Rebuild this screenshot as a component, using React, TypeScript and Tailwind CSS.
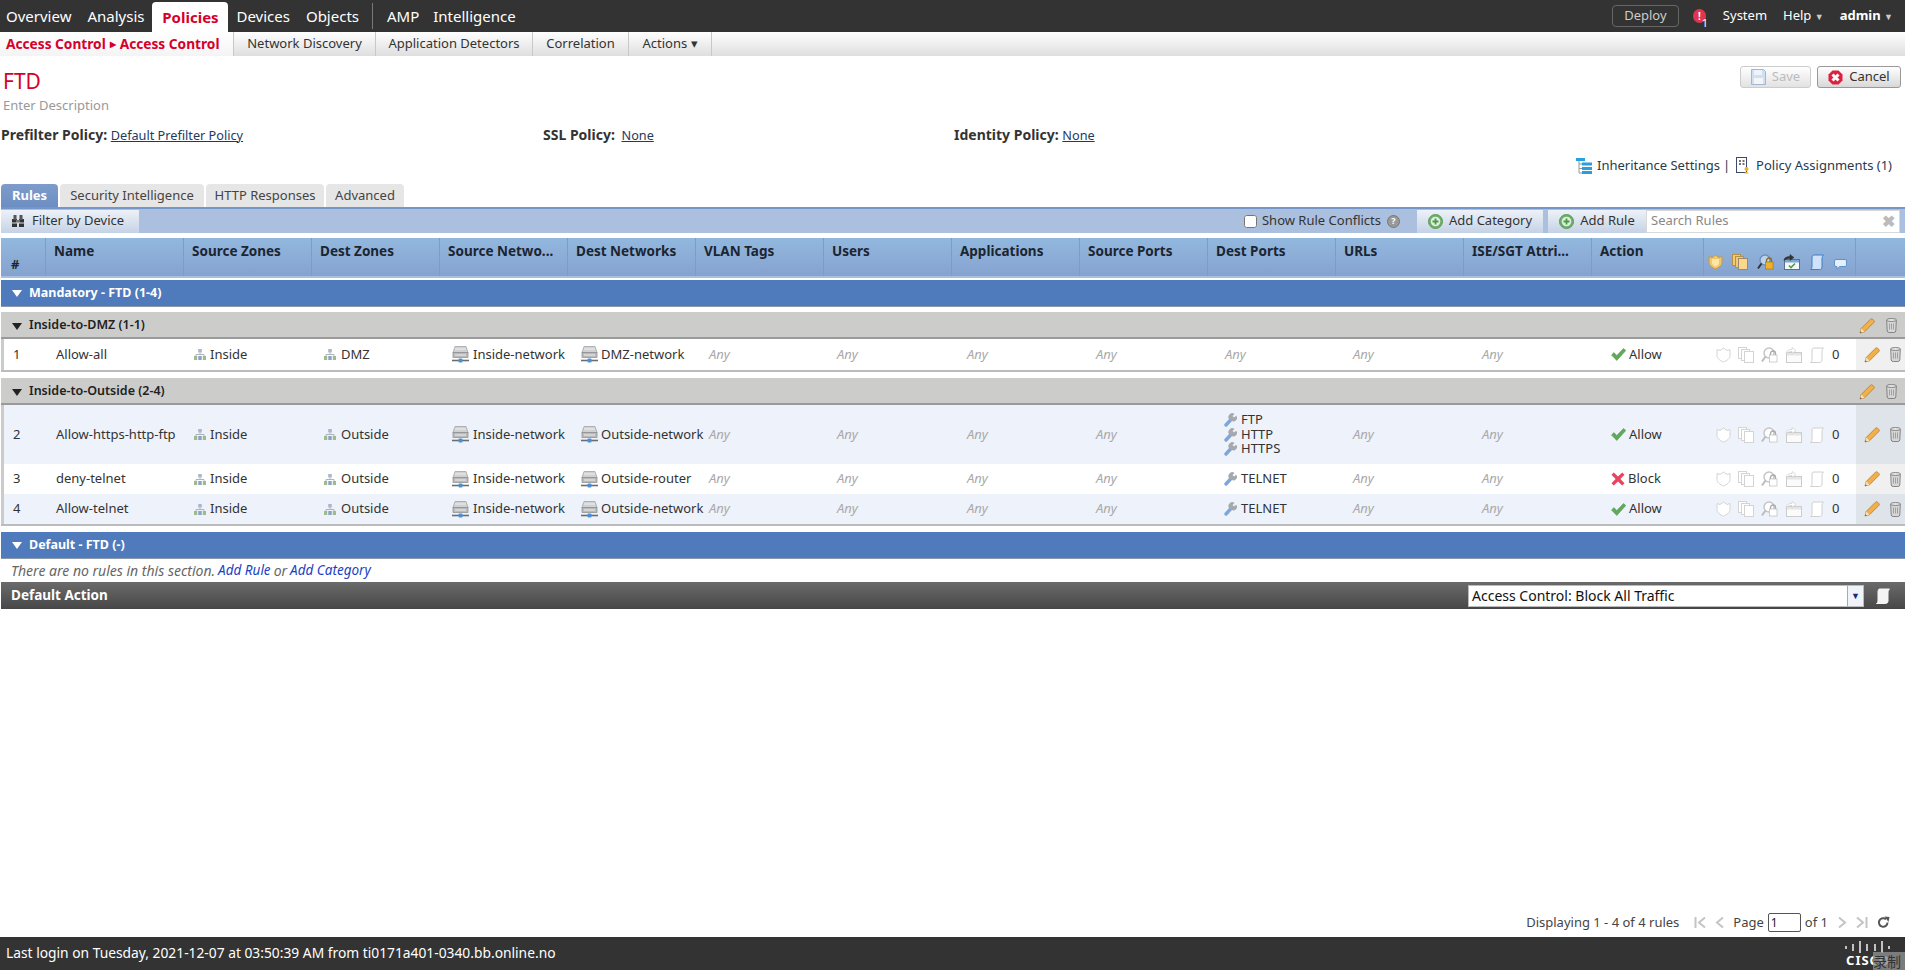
import React from 'react';

const COLS = 'grid grid-cols-[45px_138px_repeat(11,128px)_112px_152px_1fr]';

type IconProps = { muted?: boolean };

const ZoneIcon = () => (
  <svg width="12" height="11" viewBox="0 0 12 11" className="shrink-0">
    <rect x="4.200" y="0" width="3.600" height="3.500" fill="#a9b8d0" />
    <path d="M6 3.500v2M2 7V5.500h8V7" stroke="#b0b4ba" fill="none" />
    <rect x="0" y="7" width="3.200" height="4" fill="#9dbb8f" />
    <rect x="4.300" y="7" width="3.400" height="4" fill="#8aa2c4" />
    <rect x="8.800" y="7" width="3.200" height="4" fill="#9dbb8f" />
  </svg>
);

const NetIcon = () => (
  <svg width="17" height="17" viewBox="0 0 17 17" className="shrink-0">
    <path d="M3 .5h11l2 6H1z" fill="#d0d1d2" stroke="#9a9b9c" strokeWidth="0.700" />
    <rect x="1" y="6.500" width="15" height="5" fill="#b9babb" stroke="#8a8b8c" strokeWidth="0.700" />
    <path d="M3 3h11M3 9h11" stroke="#eeeeee" />
    <path d="M0 14.500h17" stroke="#6a6c6e" strokeWidth="1.600" />
    <rect x="6.500" y="12.500" width="4" height="4" rx="1" fill="#4a90d9" />
  </svg>
);

const PortIcon = () => (
  <svg width="13" height="14" viewBox="0 0 13 14" className="shrink-0">
    <path d="M2 12 7 6.500" stroke="#7fa6dc" strokeWidth="3.400" strokeLinecap="round" />
    <path d="M6 7 a3.400 3.400 0 0 1 4.500-6 l-2 2 1.600 1.500 2-1.800 a3.400 3.400 0 0 1-4.800 4.800z" fill="#a5a8ad" />
  </svg>
);

const Check = () => (
  <svg width="15" height="13" viewBox="0 0 15 13" className="shrink-0">
    <path d="M0.500 7 3 4.600 5.700 7.600 12.500 0.500 14.800 2.500 5.800 12.500z" fill="#63a95b" stroke="#4a9146" strokeWidth="0.500" />
  </svg>
);

const Cross = () => (
  <svg width="14" height="14" viewBox="0 0 14 14" className="shrink-0">
    <path d="M0.500 2.800 2.800 0.500 7 4.600 11.200 0.500 13.500 2.800 9.400 7 13.500 11.200 11.200 13.500 7 9.400 2.800 13.500 0.500 11.200 4.600 7z" fill="#e8435f" />
  </svg>
);

const Shield = ({ muted }: IconProps) => (
  <svg width="15" height="16" viewBox="0 0 15 16" className="shrink-0">
    <path d="M1 2.500 4 3.500 7.500 1 11 3.500 14 2.500v6c0 3-3.500 5.500-6.500 6.500C4.500 14 1 11.500 1 8.500z" fill={muted ? '#fff' : '#f3c568'} stroke={muted ? '#d4d4d4' : '#c89a3a'} />
    {!muted && <path d="M4 5h7v4c0 1.500-2 3-3.500 3.500C6 12 4 10.500 4 9z" fill="#fbe6a8" />}
  </svg>
);

const Docs = ({ muted }: IconProps) => (
  <svg width="16" height="16" viewBox="0 0 16 16" className="shrink-0">
    <rect x="0.500" y="0.500" width="8" height="11" fill={muted ? '#fff' : '#f5c876'} stroke={muted ? '#d4d4d4' : '#b78f45'} />
    <rect x="3.500" y="2.500" width="8" height="11" fill={muted ? '#fff' : '#f5c876'} stroke={muted ? '#d4d4d4' : '#b78f45'} />
    <rect x="6.500" y="4.500" width="9" height="11" fill={muted ? '#fff' : '#fbd78e'} stroke={muted ? '#d4d4d4' : '#9a8a6a'} />
  </svg>
);

const LockSearch = ({ muted }: IconProps) => (
  <svg width="17" height="16" viewBox="0 0 17 16" className="shrink-0">
    <circle cx="8" cy="6" r="5" fill={muted ? '#fff' : '#bcd3ee'} stroke={muted ? '#c4c4c4' : '#6d8fb8'} strokeWidth="1.400" />
    <path d="M4.500 9.500 1 14.500" stroke={muted ? '#bcbcbc' : '#333'} strokeWidth="2" />
    <path d="M9.500 8V6.500a2.500 2.500 0 0 1 5 0V8" fill="none" stroke={muted ? '#aaaaaa' : '#8c6a1e'} strokeWidth="1.300" />
    <rect x="8.500" y="8" width="7.500" height="7" fill={muted ? '#fff' : '#eeb22e'} stroke={muted ? '#bcbcbc' : '#a47a1a'} strokeWidth="0.700" />
  </svg>
);

const BoxIcon = ({ muted }: IconProps) => (
  <svg width="17" height="16" viewBox="0 0 17 16" className="shrink-0">
    <rect x="1.500" y="5.500" width="15" height="10" fill={muted ? '#fbfbfb' : '#f3f6fa'} stroke={muted ? '#cccccc' : '#5b6f88'} />
    <rect x="2" y="6" width="14" height="2.500" fill={muted ? '#e6e6e6' : '#7ea6d2'} />
    <path d="M1 6.500C1 3.500 4 2.500 7 2.500V0.500L11 3.500 7 6.500V4.500C4.500 4.500 3 5 1 6.500z" fill={muted ? '#fff' : '#333'} stroke={muted ? '#bcbcbc' : '#333'} strokeWidth="0.500" />
    {!muted && <path d="M6 11.500 8 13.500 12 9.500" stroke="#4f9c48" strokeWidth="1.600" fill="none" />}
  </svg>
);

const Scroll = ({ muted, white }: IconProps & { white?: boolean }) => {
  const fill = white ? '#f4f4f4' : muted ? '#fff' : '#cfe2f7';
  const line = white ? '#f4f4f4' : muted ? '#d0d0d0' : '#3f7fc4';
  return (
    <svg width="16" height="16" viewBox="0 0 16 16" className="shrink-0">
      <path d="M4 1h10.500c-1 1-1.500 2-1.500 4v8c0 1.500-1 2.500-2.500 2.500H1.500c1-.5 1.500-1.500 1.500-2.500V4C3 2.500 3.500 1.500 4 1z" fill={fill} stroke={line} />
    </svg>
  );
};

const Chat = () => (
  <svg width="13" height="11" viewBox="0 0 13 11" className="shrink-0">
    <path d="M2 .5h9a1.500 1.500 0 0 1 1.500 1.500v4a1.500 1.500 0 0 1-1.500 1.500H5.500L3 10.500V7.500H2A1.500 1.500 0 0 1 .5 6V2A1.500 1.500 0 0 1 2 .5z" fill="#e6f0fb" stroke="#5c93cc" />
  </svg>
);

const Pencil = () => (
  <svg width="16" height="16" viewBox="0 0 16 16" className="shrink-0">
    <path d="M1 15l1.200-4.500L11.500 1.200a1.500 1.500 0 0 1 2.100 0l1.200 1.200a1.500 1.500 0 0 1 0 2.100L5.500 13.800z" fill="#f2b04a" stroke="#b8792a" strokeWidth="0.800" />
    <path d="M1 15l1.200-4.500 3.300 3.300z" fill="#f7e0ba" />
    <path d="M1 15l.5-1.800 1.300 1.300z" fill="#444" />
  </svg>
);

const Trash = () => (
  <svg width="11" height="15" viewBox="0 0 11 15" className="shrink-0">
    <path d="M.7 2 1.200 13a2 2 0 0 0 2 1.500h4.600a2 2 0 0 0 2-1.500L10.300 2z" fill="#d6d6d6" stroke="#6f6f6f" strokeWidth="0.800" />
    <ellipse cx="5.500" cy="2" rx="4.800" ry="1.500" fill="#e6e6e6" stroke="#6f6f6f" strokeWidth="0.800" />
    <path d="M3.500 5.500v6M5.500 5.500v6M7.500 5.500v6" stroke="#a0a0a0" />
  </svg>
);

const PlusCircle = () => (
  <svg width="15" height="15" viewBox="0 0 15 15" className="shrink-0">
    <circle cx="7.500" cy="7.500" r="7" fill="#6fae69" stroke="#5c9a5a" />
    <circle cx="7.500" cy="7.500" r="4.800" fill="#dfeedd" />
    <path d="M7.500 4.500v6M4.500 7.500h6" stroke="#4b9a4b" strokeWidth="1.800" />
  </svg>
);

const HeaderCell = ({ children }: { children?: React.ReactNode }) => (
  <div className="border-r border-[#7f9cc2] pl-[8px] pt-[3px] font-bold text-[13.500px] text-[#1c2530] truncate pr-1">{children}</div>
);

const Any = ({ pl }: { pl: string }) => <div className={`${pl} italic text-[#a9a9a9]`}>Any</div>;

const Row = ({ n, name, dest, net, ports, action, shaded, tall }: {
  n: number; name: string; dest: string; net: string; ports: string[]; action: 'Allow' | 'Block'; shaded?: boolean; tall?: boolean;
}) => (
  <div className={`${COLS} items-center shadow-[inset_3px_0_0_#cbcbcb] ${shaded ? 'bg-[#eef2fb]' : 'bg-white'} ${tall ? 'h-[59px]' : n === 1 ? 'h-[31px]' : 'h-[30px]'} text-[#333]`}>
    <div className="pl-[12px]">{n}</div>
    <div className="pl-[10px]">{name}</div>
    <div className="flex items-center gap-[4px] pl-[10px]"><ZoneIcon />Inside</div>
    <div className="flex items-center gap-[5px] pl-[12px]"><ZoneIcon />{dest}</div>
    <div className="flex items-center gap-[4px] pl-[12px]"><NetIcon />Inside-network</div>
    <div className="flex items-center gap-[3px] pl-[13px] whitespace-nowrap"><NetIcon />{net}</div>
    <Any pl="pl-[13px]" /><Any pl="pl-[13px]" /><Any pl="pl-[15px]" /><Any pl="pl-[16px]" />
    {ports.length === 0 ? <Any pl="pl-[17px]" /> : (
      <div className="flex flex-col pl-[16px]">
        {ports.map((p) => (
          <div key={p} className="flex items-center gap-[4px] h-[14.500px]"><PortIcon />{p}</div>
        ))}
      </div>
    )}
    <Any pl="pl-[17px]" /><Any pl="pl-[18px]" />
    <div className="flex items-center gap-[3px] pl-[19px]">
      {action === 'Allow' ? <Check /> : <Cross />}{action}
    </div>
    <div className="flex items-center justify-start gap-[7px] pl-[12px] whitespace-nowrap">
      <Shield muted /><Docs muted /><LockSearch muted /><BoxIcon muted /><Scroll muted /><span>0</span>
    </div>
    <div className={`flex items-center gap-[10px] pl-[8px] h-full ${shaded ? 'bg-[#dfe3ea]' : 'bg-[#f0f0f0]'}`}>
      <Pencil /><Trash />
    </div>
  </div>
);

const BlueBand = ({ label }: { label: string }) => (
  <div className="h-[27px] ml-px bg-[#4f7abc] border-b border-[#8a98aa] flex items-center text-white text-[12.500px] font-bold pl-[11px] gap-[7px]">
    <span className="w-0 h-0 border-x-[5px] border-x-transparent border-t-[7px] border-t-white mt-[1px]" />
    {label}
  </div>
);

const GreyBand = ({ label }: { label: string }) => (
  <div className="h-[27px] ml-px pt-[2px] bg-[#cccccb] border-b-2 border-[#9a9a9a] flex items-center text-[12.500px] font-semibold text-[#222] pl-[11px] gap-[7px]">
    <span className="w-0 h-0 border-x-[5px] border-x-transparent border-t-[7px] border-t-[#222] mt-[1px]" />
    {label}
    <span className="ml-auto flex items-center gap-[11px] pr-[8px]"><Pencil /><Trash /></span>
  </div>
);

const navLeft = ['Overview', 'Analysis'];

export default function App() {
  return (
    <div className="relative h-[970px] w-[1905px] flex flex-col overflow-hidden bg-white text-[13px] text-[#333] font-['Noto_Sans','Liberation_Sans',sans-serif]">
      {/* top bar */}
      <div className="h-[32px] shrink-0 bg-[#333] flex items-end text-white text-[15px] pl-[6px]">
        <div className="flex items-center h-[32px] gap-[16px]">
          {navLeft.map((t) => <span key={t}>{t}</span>)}
        </div>
        <div className="h-[30px] w-[76px] ml-[8px] bg-white rounded-t-[4px] text-[#d6002a] font-bold flex items-center justify-center">Policies</div>
        <div className="flex items-center h-[32px] gap-[16px] ml-[8px]">
          <span>Devices</span>
          <span>Objects</span>
        </div>
        <div className="h-[26px] w-px bg-[#777] ml-[13px] mb-[3px]" />
        <div className="flex items-center h-[32px] gap-[14px] ml-[14px]">
          <span>AMP</span>
          <span>Intelligence</span>
        </div>
        <div className="ml-auto flex items-center h-[32px] text-[13px] pr-[12px]">
          <div className="w-[67px] h-[22px] rounded-[4px] border border-[#666] text-[#ccc] flex items-center justify-center mr-[14px]">Deploy</div>
          <div className="relative w-[13px] h-[14px] rounded-full bg-[#e0354f] text-center text-[10px] leading-[14px] font-bold mr-[17px]">!
            <span className="absolute left-[9px] top-[7px] text-[11px] font-normal">1</span>
          </div>
          <span>System</span>
          <span className="ml-[16px]">Help <span className="text-[9px] text-[#ccc]">▼</span></span>
          <span className="ml-[16px] font-bold">admin <span className="text-[9px] font-normal text-[#ccc]">▼</span></span>
        </div>
      </div>

      {/* second nav */}
      <div className="h-[24px] shrink-0 flex bg-linear-to-b from-white to-[#dedede] text-[13px] text-[#333]">
        <div className="w-[234px] bg-linear-to-b from-white to-[#f4f4f4] pl-[6px] flex items-center text-[13.700px] font-bold text-[#d6002a] border-r border-[#c8c8c8] whitespace-nowrap">
          Access Control <span className="text-[8px] mx-[4px]">▶</span> Access Control
        </div>
        {[
          ['Network Discovery', 'w-[142px]'],
          ['Application Detectors', 'w-[157px]'],
          ['Correlation', 'w-[96px]'],
          ['Actions ▾', 'w-[83px]'],
        ].map(([t, w]) => (
          <div key={t} className={`${w} border-r border-[#c8c8c8] flex items-center justify-center whitespace-nowrap`}>{t}</div>
        ))}
      </div>

      {/* title */}
      <div className="relative shrink-0 h-[128px] pl-[1px]">
        <div className="pl-[2px] pt-[13px] text-[21px] leading-[24px] text-[#d6002a]">FTD</div>
        <div className="pl-[2px] mt-[3px] text-[13px] text-[#999]">Enter Description</div>
        <div className="mt-[10px] flex text-[14px] leading-[18px]">
          <div className="w-[542px]"><b>Prefilter Policy:</b> <span className="underline text-[#1f3a5f] text-[12.700px]">Default Prefilter Policy</span></div>
          <div className="w-[411px]"><b>SSL Policy:</b> <span className="ml-[3px] underline text-[#1f3a5f] text-[12.700px]">None</span></div>
          <div><b>Identity Policy:</b> <span className="underline text-[#1f3a5f] text-[12.700px]">None</span></div>
        </div>
        <div className="absolute right-[4px] top-[10px] flex gap-[6px] text-[13px]">
          <div className="w-[71px] h-[22px] rounded-[3px] border border-[#ccc] bg-linear-to-b from-white to-[#e2e2e2] flex items-center justify-center gap-[6px] text-[#bbb]">
            <svg width="15" height="16" viewBox="0 0 15 16"><path d="M.5.5h12l2 2v13H.5z" fill="#cfe0f2" stroke="#9fb7d2" /><rect x="3" y="1" width="8" height="5" fill="#eef4fb" /><rect x="3" y="9" width="9" height="6" fill="#f5f5f5" /></svg>
            Save
          </div>
          <div className="w-[84px] h-[22px] rounded-[3px] border border-[#999] bg-linear-to-b from-white to-[#d8d8d8] flex items-center justify-center gap-[6px] text-[#333]">
            <svg width="15" height="15" viewBox="0 0 15 15"><path d="M4.500.500h6l4 4v6l-4 4h-6l-4-4v-6z" fill="#de1f3e" /><path d="M4.500 4.500l6 6M10.500 4.500l-6 6" stroke="#fff" strokeWidth="3" /></svg>
            Cancel
          </div>
        </div>
        <div className="absolute right-[13px] top-[100px] flex items-center text-[13px] text-[#2a3a4c] whitespace-nowrap">
          <svg width="16" height="16" viewBox="0 0 16 16" className="mr-[5px]">
            <rect x="0" y="0" width="9" height="3" fill="#2a9fe0" /><rect x="6" y="4.500" width="10" height="3" fill="#2a9fe0" /><rect x="6" y="9" width="10" height="3" fill="#2a9fe0" /><rect x="6" y="13" width="10" height="3" fill="#2a9fe0" />
            <path d="M3 3v12h3M3 6h3M3 10.500h3" stroke="#999" fill="none" />
          </svg>
          Inheritance Settings
          <span className="ml-[3px] mr-[6px]">|</span>
          <svg width="14" height="17" viewBox="0 0 14 17" className="mr-[6px]">
            <rect x=".5" y=".5" width="10" height="15" fill="#fff" stroke="#3c4a6b" />
            <path d="M3 4h2M6.500 4h2M3 7h2M6.500 7h2" stroke="#444" strokeWidth="1.500" />
            <circle cx="10.500" cy="12" r="2" fill="#eeb22e" /><path d="M8.500 16.500c0-2 4-2 4 0" fill="#eeb22e" />
          </svg>
          Policy Assignments (1)
        </div>
      </div>

      {/* tabs */}
      <div className="h-[23px] shrink-0 flex items-end gap-[2px] pl-[1px] text-[13px]">
        <div className="w-[57px] h-[23px] rounded-t-[4px] bg-linear-to-b from-[#7d9ccb] to-[#6d8ec2] text-white font-bold flex items-center justify-center">Rules</div>
        {[['Security Intelligence', 'w-[144px]'], ['HTTP Responses', 'w-[118px]'], ['Advanced', 'w-[78px]']].map(([t, w]) => (
          <div key={t} className={`${w} h-[23px] rounded-t-[4px] bg-[#e6e6e6] text-[#444] flex items-center justify-center whitespace-nowrap`}>{t}</div>
        ))}
      </div>

      {/* toolbar */}
      <div className="h-[26px] shrink-0 ml-px bg-[#abc0df] border-t-2 border-[#7596c8] flex items-center justify-between pr-[5px]">
        <div className="w-[138px] h-[23px] bg-linear-to-b from-[#eef2f8] to-[#c5d2e6] flex items-center gap-[7px] pl-[10px] text-[#333]">
          <svg width="14" height="14" viewBox="0 0 14 14"><rect x="1" y="5" width="5" height="8" fill="#333" /><rect x="8" y="5" width="5" height="8" fill="#333" /><rect x="2.500" y="1" width="3" height="5" fill="#555" /><rect x="8.500" y="1" width="3" height="5" fill="#555" /><rect x="5" y="6" width="4" height="3" fill="#777" /><path d="M1 9h12" stroke="#ddd" /></svg>
          Filter by Device
        </div>
        <div className="flex items-center h-[23px]">
          <input type="checkbox" readOnly className="w-[13px] h-[13px] mr-[5px]" />
          <span className="text-[#333]">Show Rule Conflicts</span>
          <span className="ml-[6px] w-[13px] h-[13px] rounded-full bg-[#999] border border-[#777] text-white text-[9px] font-bold flex items-center justify-center">?</span>
          <div className="ml-[17px] w-[126px] h-[23px] bg-linear-to-b from-[#eef2f8] to-[#c5d2e6] flex items-center justify-center gap-[6px]"><PlusCircle />Add Category</div>
          <div className="ml-[5px] w-[98px] h-[23px] bg-linear-to-b from-[#eef2f8] to-[#c5d2e6] flex items-center justify-center gap-[6px]"><PlusCircle />Add Rule</div>
          <div className="w-[254px] h-[23px] bg-white border border-[#d8d8d8] flex items-center justify-between px-[4px] text-[#888]">
            Search Rules
            <span className="text-[#bbb] text-[16px] font-bold leading-none">✖</span>
          </div>
        </div>
      </div>

      {/* table head */}
      <div className={`${COLS} mt-[5px] ml-px h-[40px] shrink-0 bg-linear-to-b from-[#92b8de] to-[#86a2cf] border-b-2 border-[#a8c0dc]`}>
        <div className="border-r border-[#7f9cc2] pl-[10px] pt-[17px] font-bold text-[#1c2530]">#</div>
        {['Name', 'Source Zones', 'Dest Zones', 'Source Netwo...', 'Dest Networks', 'VLAN Tags', 'Users', 'Applications', 'Source Ports', 'Dest Ports', 'URLs', 'ISE/SGT Attri...', 'Action'].map((h) => (
          <HeaderCell key={h}>{h}</HeaderCell>
        ))}
        <div className="border-r border-[#7f9cc2] flex items-end gap-[9px] pl-[4px] pb-[6px]">
          <Shield /><Docs /><LockSearch /><BoxIcon /><Scroll /><Chat />
        </div>
        <div />
      </div>

      <div className="mt-[2px] shrink-0">
        <BlueBand label="Mandatory - FTD (1-4)" />
        <div className="mt-[5px]"><GreyBand label="Inside-to-DMZ (1-1)" /></div>
        <div className="ml-px border-b-2 border-[#bbb]">
          <Row n={1} name="Allow-all" dest="DMZ" net="DMZ-network" ports={[]} action="Allow" />
        </div>
        <div className="mt-[6px]"><GreyBand label="Inside-to-Outside (2-4)" /></div>
        <div className="ml-px border-b-2 border-[#bbb]">
          <Row n={2} name="Allow-https-http-ftp" dest="Outside" net="Outside-network" ports={['FTP', 'HTTP', 'HTTPS']} action="Allow" shaded tall />
          <Row n={3} name="deny-telnet" dest="Outside" net="Outside-router" ports={['TELNET']} action="Block" />
          <Row n={4} name="Allow-telnet" dest="Outside" net="Outside-network" ports={['TELNET']} action="Allow" shaded />
        </div>
        <div className="mt-[6px]"><BlueBand label="Default - FTD (-)" /></div>
        <div className="h-[23px] pl-[11px] flex items-center italic text-[14px] text-[#666] gap-[3px]">
          There are no rules in this section. <span className="text-[13.500px] text-[#1a3fc4]">Add Rule</span> or <span className="text-[13.500px] text-[#1a3fc4]">Add Category</span>
        </div>
        <div className="h-[27px] ml-px bg-linear-to-b from-[#6b6b6b] to-[#474747] flex items-center justify-between pl-[10px] pr-[14px] text-[13.500px] text-white font-bold">
          Default Action
          <div className="flex items-center gap-[11px]">
            <div className="w-[396px] h-[22px] bg-white border border-[#bbb] flex items-center justify-between pl-[3px] text-[14px] text-[#111] font-normal">
              Access Control: Block All Traffic
              <span className="w-[16px] h-full border-l border-[#aaa] bg-[#f0f4fa] flex items-center justify-center text-[9px] text-[#1b2a7a]">▼</span>
            </div>
            <Scroll white />
          </div>
        </div>
      </div>

      {/* pagination */}
      <div className="flex-1 flex items-end justify-end pr-[15px] pb-[5px]">
        <div className="flex items-center h-[19px] text-[#444]">
          <span>Displaying 1 - 4 of 4 rules</span>
          <svg width="13" height="13" viewBox="0 0 13 13" className="ml-[15px]">
            <path d="M1.500 1v11M11 1.500 5 6.500l6 5" stroke="#c4c4c4" strokeWidth="2" fill="none" />
          </svg>
          <svg width="9" height="13" viewBox="0 0 9 13" className="ml-[8px]">
            <path d="M8 1.500 2 6.500l6 5" stroke="#c4c4c4" strokeWidth="2" fill="none" />
          </svg>
          <span className="ml-[9px]">Page</span>
          <input readOnly value="1" className="ml-[4px] w-[33px] h-[19px] border border-[#555] rounded-[2px] pl-[2px] text-[12px] text-[#222]" />
          <span className="ml-[4px]">of 1</span>
          <svg width="9" height="13" viewBox="0 0 9 13" className="ml-[10px]">
            <path d="M1 1.500 7 6.500l-6 5" stroke="#c4c4c4" strokeWidth="2" fill="none" />
          </svg>
          <svg width="13" height="13" viewBox="0 0 13 13" className="ml-[8px]">
            <path d="M11.500 1v11M2 1.500 8 6.500l-6 5" stroke="#c4c4c4" strokeWidth="2" fill="none" />
          </svg>
          <svg width="13" height="13" viewBox="0 0 13 13" className="ml-[9px]">
            <path d="M10.500 6.500a4.300 4.300 0 1 1-1.500-3.300" fill="none" stroke="#555" strokeWidth="2" />
            <path d="M7.500 0.500l5 .5-1 5z" fill="#555" />
          </svg>
        </div>
      </div>

      {/* footer */}
      <div className="relative h-[33px] shrink-0 bg-[#333] text-white flex items-center pl-[6px] text-[13.800px]">
        Last login on Tuesday, 2021-12-07 at 03:50:39 AM from ti0171a401-0340.bb.online.no
        <div className="absolute left-[1845px] top-[4px] flex flex-col items-center">
          <svg width="46" height="12" viewBox="0 0 46 12">
            <path d="M1 5v3M8 3v7M15 0v12M22 3v7M30 3v7M37 0v12M44 5v3" stroke="#fff" strokeWidth="1.400" />
          </svg>
          <span className="text-[13px] font-bold leading-[14px] tracking-[1px]">CISCO</span>
        </div>
        <div className="absolute left-[1873px] top-[15px] w-[32px] h-[18px] bg-[#8f8f8f]/80 text-[#333] text-[14px] leading-[18px] font-['Noto_Sans_CJK_SC',sans-serif]">录制</div>
      </div>
    </div>
  );
}
